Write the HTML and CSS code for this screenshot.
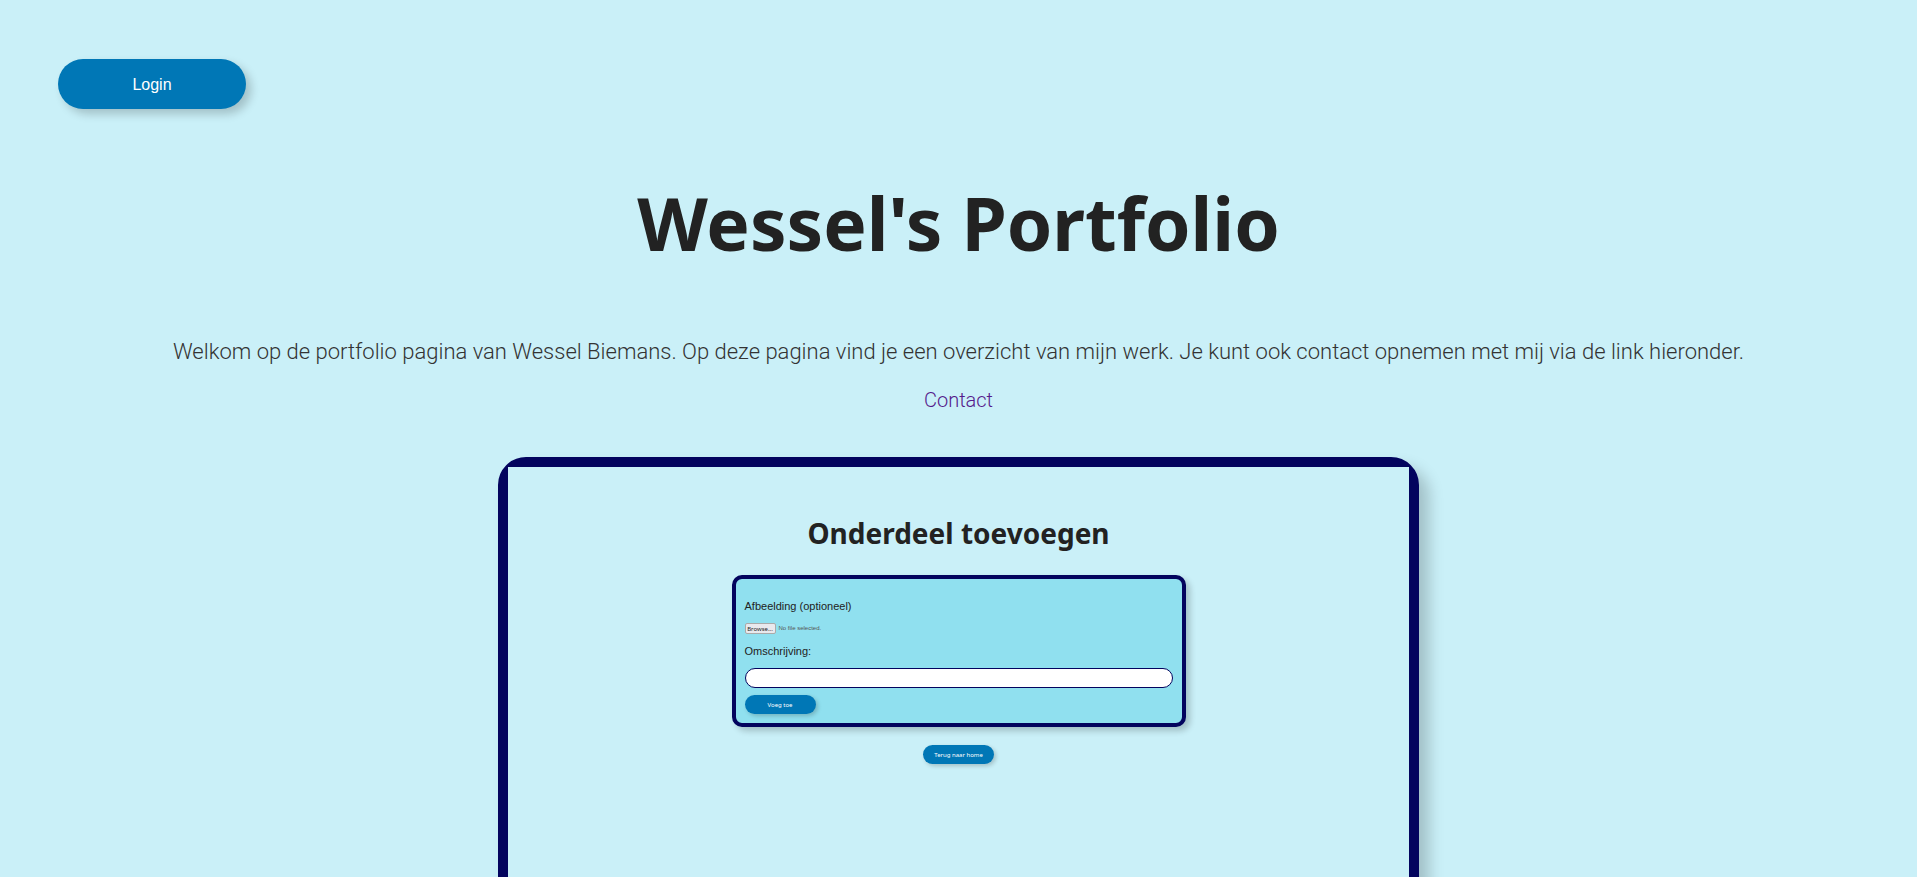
FILE: index.html
```html
<!DOCTYPE html>
<html lang="nl">
<head>
    <meta charset="UTF-8">
    <meta name="viewport" content="width=device-width, initial-scale=1.0">
    <title>Wessel's Portfolio</title>
    <link rel="stylesheet" href="styles.css">
</head>
<body>
    <header>
        <button type="button" class="button login">Login</button>
    </header>

    <main>
        <h1>Wessel's Portfolio</h1>
        <p class="intro">Welkom op de portfolio pagina van Wessel Biemans. Op deze pagina vind je een overzicht van mijn werk. Je kunt ook contact opnemen met mij via de link hieronder.</p>
        <a class="contact" href="#contact">Contact</a>

        <section class="frame">
            <div class="screen">
                <h2>Onderdeel toevoegen</h2>
                <form class="panel">
                    <label for="image">Afbeelding (optioneel)</label>
                    <div class="file">
                        <input type="file" id="image">
                        <button type="button" class="browse">Browse...</button>
                        <span>No file selected.</span>
                    </div>
                    <label for="description">Omschrijving:</label>
                    <input type="text" id="description">
                    <button type="button" class="button small">Voeg toe</button>
                </form>
                <button type="button" class="button small">Terug naar home</button>
            </div>
        </section>
    </main>
</body>
</html>
```

FILE: styles.css
```css
* {
    box-sizing: border-box;
}
body {
    margin: 0;
    background-color: #caf0f8;
    color: #222;
    font-family: Roboto, sans-serif;
}
header {
    padding: 59px 58px 0;
}
main {
    display: flex;
    flex-direction: column;
    align-items: center;
    padding-bottom: 40px;
}
.button {
    border: none;
    border-radius: 30px;
    background-color: #0077b6;
    color: white;
    cursor: pointer;
}
.login {
    width: 188px;
    height: 50px;
    padding: 2px 0 0;
    font-family: "Liberation Sans", Arial, sans-serif;
    font-size: 16px;
    box-shadow: 5px 5px 10px rgba(0, 0, 0, 0.2);
}
h1 {
    margin: 64px 0 0;
    font-family: "Noto Sans", sans-serif;
    font-size: 73px;
    line-height: 100px;
}
.intro {
    margin: 63px 40px 0;
    color: #333;
    font-size: 22px;
    font-weight: 300;
    line-height: 32px;
    text-align: center;
}
.contact {
    margin-top: 20px;
    color: #551a8b;
    font-size: 20px;
    font-weight: 300;
    line-height: 24px;
    text-decoration: none;
}
.frame {
    width: 48%;
    margin-top: 45px;
    border: 10px solid #03045e;
    border-radius: 28px;
    background-color: #03045e;
    box-shadow: 10px 10px 15px rgba(0, 0, 0, 0.2);
}
.screen {
    display: flex;
    flex-direction: column;
    align-items: center;
    min-height: 450px;
    background-color: #caf0f8;
}
h2 {
    margin: 46px 0 0;
    font-family: "Noto Sans", sans-serif;
    font-size: 28px;
    line-height: 40px;
}
.panel {
    width: 454px;
    max-width: 90%;
    margin: 22px 0 18px;
    padding: 17px 9px 9px;
    border: 4px solid #03045e;
    border-radius: 10px;
    background-color: #90e0ef;
    box-shadow: 4px 4px 6px rgba(0, 0, 0, 0.2);
}
.panel label {
    display: block;
    font-family: "Liberation Sans", Arial, sans-serif;
    font-size: 11px;
    line-height: 20px;
}
.file {
    display: flex;
    align-items: center;
    gap: 3px;
    position: relative;
    margin: 7px 0;
    color: #555;
    font-family: "Liberation Sans", Arial, sans-serif;
    font-size: 6px;
    line-height: 11px;
}
/* native control stays clickable on top of the styled one */
.file input {
    position: absolute;
    width: 80px;
    height: 11px;
    opacity: 0;
}
.browse {
    width: 31px;
    height: 11px;
    padding: 0;
    border: 1px solid #aaa;
    border-radius: 2px;
    background-color: #e9e9ed;
    color: #222;
    font-family: "Noto Sans", sans-serif;
    font-size: 6px;
    line-height: 8px;
}
.panel input[type="text"] {
    display: block;
    width: 100%;
    height: 20px;
    margin: 7px 0;
    padding: 0 8px;
    border: 1px solid #03045e;
    border-radius: 10px;
    background-color: white;
}
.small {
    display: block;
    width: 71px;
    height: 19px;
    padding: 0;
    font-family: "Noto Sans", sans-serif;
    font-size: 6px;
    box-shadow: 2px 2px 4px rgba(0, 0, 0, 0.2);
}
```
